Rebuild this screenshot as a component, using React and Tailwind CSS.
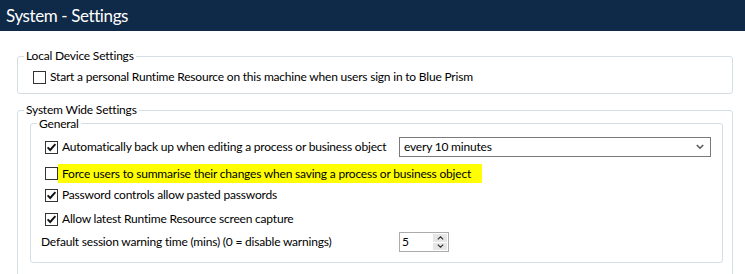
import React from "react";

function Check({ checked }) {
  return (
    <span className="w-[13px] h-[13px] border border-[#333333] bg-white flex items-center justify-center shrink-0">
      {checked && (
        <svg width="11" height="11" viewBox="0 0 11 11">
          <path d="M1.6 5.4 L4.2 8 L9.4 2.2" fill="none" stroke="#111" strokeWidth="1.9" />
        </svg>
      )}
    </span>
  );
}

export default function App() {
  return (
    <div className="w-[745px] h-[274px] bg-white overflow-hidden text-[12px] leading-[16px] tracking-[-0.2px] text-black whitespace-nowrap font-['Lato',sans-serif]">
      <div className="h-[31px] bg-[#0f2948] text-white text-[17px] tracking-[-0.4px] leading-[31px] pl-[6px]">System - Settings</div>
      <div className="pl-[17px] pt-[17px]">
        <fieldset className="w-[716px] border border-[#d5dde5] rounded-[3px] p-0 m-0">
          <legend className="ml-[6px] px-[2px] leading-[16px]">Local Device Settings</legend>
          <div className="pl-[15px] pt-[5px] pb-[8px]">
            <div className="h-[16px] flex items-center">
              <Check checked={false} />
              <span className="ml-[4px]">Start a personal Runtime Resource on this machine when users sign in to Blue Prism</span>
            </div>
          </div>
        </fieldset>
        <fieldset className="mt-[9px] w-[716px] border border-[#d5dde5] rounded-[3px] p-0 m-0">
          <legend className="ml-[6px] px-[2px] leading-[14px]">System Wide Settings</legend>
          <div className="pl-[12px] pr-[9px] pb-[30px]">
            <fieldset className="border border-[#d5dde5] rounded-[3px] p-0 m-0">
              <legend className="ml-[6px] px-[2px] leading-[13px]">General</legend>
              <div className="pl-[14px] pr-[11px] pb-[10px]">
                <div className="mt-[7px] h-[20px] flex items-center">
                  <div className="w-[354px] flex items-center">
                    <Check checked />
                    <span className="ml-[4px]">Automatically back up when editing a process or business object</span>
                  </div>
                  <div className="flex-1 h-[20px] border border-[#7a7a7a] bg-white flex items-center pl-[4px] pr-[6px]">
                    <span className="flex-1">every 10 minutes</span>
                    <svg width="8" height="6" viewBox="0 0 8 6">
                      <path d="M0.8 1 L4 4.2 L7.2 1" fill="none" stroke="#5a5a5a" strokeWidth="1.6" />
                    </svg>
                  </div>
                </div>
                <div className="mt-[7px] h-[19px] flex items-center">
                  <Check checked={false} />
                  <span className="w-[424px] h-[19px] bg-[#ffff00] pl-[4px] flex items-center">
                    Force users to summarise their changes when saving a process or business object
                  </span>
                </div>
                <div className="mt-[2px] h-[20px] flex items-center">
                  <Check checked />
                  <span className="ml-[4px]">Password controls allow pasted passwords</span>
                </div>
                <div className="mt-[4px] h-[20px] flex items-center">
                  <Check checked />
                  <span className="ml-[4px]">Allow latest Runtime Resource screen capture</span>
                </div>
                <div className="mt-[3px] h-[20px] flex items-center -ml-[4px]">
                  <span className="w-[358px]">Default session warning time (mins) (0 = disable warnings)</span>
                  <div className="w-[50px] h-[20px] border border-[#ababab] bg-white flex">
                    <span className="flex-1 pl-[2px] leading-[18px]">5</span>
                    <div className="w-[16px] flex flex-col gap-[1px] p-[1px]">
                      <div className="flex-1 bg-[#e6e6e6] flex items-center justify-center">
                        <svg width="7" height="4" viewBox="0 0 7 4">
                          <path d="M0.8 3.4 L3.5 0.8 L6.2 3.4" fill="none" stroke="#333" strokeWidth="1.2" />
                        </svg>
                      </div>
                      <div className="flex-1 bg-[#e6e6e6] flex items-center justify-center">
                        <svg width="7" height="4" viewBox="0 0 7 4">
                          <path d="M0.8 0.6 L3.5 3.2 L6.2 0.6" fill="none" stroke="#333" strokeWidth="1.2" />
                        </svg>
                      </div>
                    </div>
                  </div>
                </div>
              </div>
            </fieldset>
          </div>
        </fieldset>
      </div>
    </div>
  );
}
